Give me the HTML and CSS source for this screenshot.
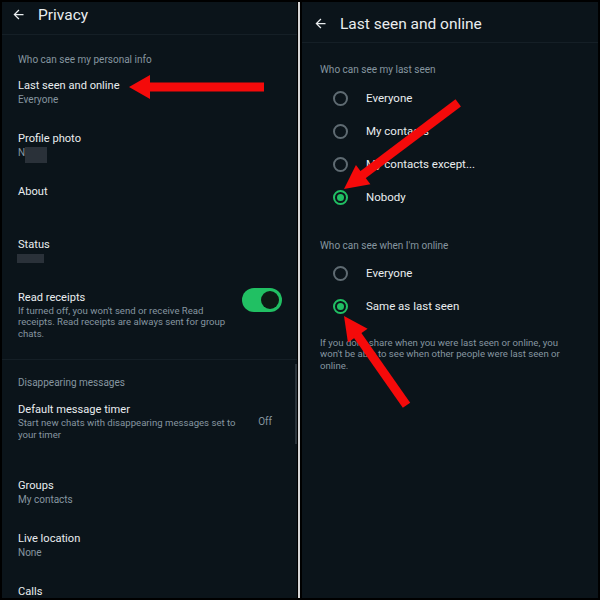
FILE: index.html
```html
<!DOCTYPE html>
<html lang="en">
<head>
    <meta charset="UTF-8">
    <meta name="viewport" content="width=device-width, initial-scale=1.0">
    <title>Privacy - Last seen and online</title>
    <link rel="stylesheet" href="styles.css">
</head>
<body>
    <div class="screens">
        <!-- Privacy settings -->
        <section class="panel privacy">
            <header class="topbar">
                <svg class="back" viewBox="0 0 24 24"><path d="M20 11H7.83l5.59-5.59L12 4l-8 8 8 8 1.41-1.41L7.83 13H20v-2z"/></svg>
                <h1>Privacy</h1>
            </header>

            <div class="section-label">Who can see my personal info</div>
            <div class="item">
                <div class="item-title">Last seen and online</div>
                <div class="item-sub">Everyone</div>
            </div>
            <div class="item">
                <div class="item-title">Profile photo</div>
                <div class="item-sub">N<span class="redact redact-photo"></span></div>
            </div>
            <div class="item">
                <div class="item-title">About</div>
            </div>
            <div class="item">
                <div class="item-title">Status</div>
                <div class="item-sub"><span class="redact redact-status"></span></div>
            </div>
            <div class="item item-row item-receipts">
                <div class="item-text">
                    <div class="item-title">Read receipts</div>
                    <div class="item-desc">If turned off, you won't send or receive Read receipts. Read receipts are always sent for group chats.</div>
                </div>
                <div class="toggle on"><span class="knob"></span></div>
            </div>

            <div class="section-label section-split">Disappearing messages</div>
            <div class="item item-row item-timer">
                <div class="item-text">
                    <div class="item-title">Default message timer</div>
                    <div class="item-desc">Start new chats with disappearing messages set to your timer</div>
                </div>
                <div class="item-value">Off</div>
            </div>
            <div class="item">
                <div class="item-title">Groups</div>
                <div class="item-sub">My contacts</div>
            </div>
            <div class="item">
                <div class="item-title">Live location</div>
                <div class="item-sub">None</div>
            </div>
            <div class="item">
                <div class="item-title">Calls</div>
            </div>
            <div class="scrollbar"></div>
        </section>

        <div class="divider"></div>

        <!-- Last seen and online -->
        <section class="panel last-seen">
            <header class="topbar topbar-tall">
                <svg class="back" viewBox="0 0 24 24"><path d="M20 11H7.83l5.59-5.59L12 4l-8 8 8 8 1.41-1.41L7.83 13H20v-2z"/></svg>
                <h1>Last seen and online</h1>
            </header>

            <div class="section-label radio-label">Who can see my last seen</div>
            <div class="radio"><span class="dot"></span>Everyone</div>
            <div class="radio"><span class="dot"></span>My contacts</div>
            <div class="radio"><span class="dot"></span>My contacts except...</div>
            <div class="radio checked"><span class="dot"></span>Nobody</div>

            <div class="section-label radio-label second">Who can see when I'm online</div>
            <div class="radio"><span class="dot"></span>Everyone</div>
            <div class="radio checked"><span class="dot"></span>Same as last seen</div>

            <p class="note">If you don't share when you were last seen or online, you won't be able to see when other people were last seen or online.</p>
        </section>

        <!-- annotation arrows drawn over both screens -->
        <svg class="arrows" viewBox="0 0 600 600">
            <g fill="#f50a0a">
                <g transform="translate(129 87)">
                    <polygon points="0,0 21,-12 21,12"/>
                    <rect x="19" y="-4.5" width="116" height="9"/>
                </g>
                <g transform="translate(344 189) rotate(-37)">
                    <polygon points="0,0 24,-12 24,12"/>
                    <rect x="22" y="-4.5" width="121" height="9"/>
                </g>
                <g transform="translate(344 316) rotate(55)">
                    <polygon points="0,0 24,-12 24,12"/>
                    <rect x="22" y="-4.5" width="87" height="9"/>
                </g>
            </g>
        </svg>
    </div>
</body>
</html>
```

FILE: styles.css
```css
* {
    margin: 0;
    padding: 0;
    box-sizing: border-box;
}

body {
    background: #000;
    font-family: Roboto, 'Liberation Sans', Arial, sans-serif;
}

.screens {
    position: relative;
    width: 600px;
    height: 600px;
    padding: 2px;
    display: flex;
    background: #000;
}

.panel {
    position: relative;
    background: #0b141a;
    color: #e9edef;
    overflow: hidden;
}

.privacy {
    width: 295px;
}

.last-seen {
    width: 296px;
}

.divider {
    width: 5px;
    border-left: 1px solid #000;
    border-right: 2px solid #000;
    background: #d6d6d6;
}

/* top bar */
.topbar {
    display: flex;
    align-items: center;
    height: 33px;
    padding-bottom: 7px;
    border-bottom: 1px solid #151f26;
}

.topbar-tall {
    height: 41px;
    padding: 3px 0 0;
}

.back {
    width: 15px;
    height: 15px;
    fill: #e9edef;
    margin: 0 12px 0 9px;
}

.last-seen .back {
    margin-left: 11px;
}

.topbar h1 {
    font-size: 15.5px;
    font-weight: 400;
    color: #e9edef;
}

/* privacy list */
.section-label {
    font-size: 10px;
    line-height: 14px;
    color: #8696a0;
    padding: 17.5px 16px 6px;
}

.section-split {
    border-top: 1px solid #151f26;
    padding-top: 16px;
    padding-bottom: 3px;
}

.item {
    min-height: 53px;
    padding: 6px 16px;
}

.item-title {
    font-size: 11.1px;
    line-height: 14px;
    color: #e9edef;
}

.item-sub {
    font-size: 10px;
    line-height: 14px;
    color: #8696a0;
    display: flex;
    align-items: flex-start;
}

.item-desc {
    font-size: 9.6px;
    line-height: 11.5px;
    color: #8696a0;
}

.item-row {
    display: flex;
    align-items: flex-start;
    gap: 14px;
}

.item-text {
    flex: 1;
}

.item-receipts {
    min-height: 74.5px;
    padding-bottom: 19.5px;
    padding-right: 15px;
}

.item-timer {
    min-height: 80px;
    padding-top: 10px;
    padding-bottom: 28px;
    padding-right: 25px;
}

.item-value {
    font-size: 10px;
    line-height: 14px;
    color: #8696a0;
    margin-top: 12px;
}

.redact {
    display: inline-block;
    background: #2a3139;
}

.redact-photo {
    width: 22px;
    height: 16px;
    margin-top: 1px;
}

.redact-status {
    width: 27px;
    height: 9px;
    margin-top: 2px;
    margin-left: -1px;
}

.toggle {
    width: 40px;
    height: 24px;
    margin-top: -3px;
    border-radius: 12px;
    background: #21c063;
    display: flex;
    align-items: center;
    justify-content: flex-end;
    padding: 3px;
}

.knob {
    width: 18px;
    height: 18px;
    border-radius: 50%;
    background: #0d1a14;
}

.scrollbar {
    position: absolute;
    right: 0;
    top: 362px;
    width: 2px;
    height: 80px;
    background: #2a333a;
}

/* last seen options */
.last-seen .section-label {
    padding: 20px 18px 4.5px;
}

.last-seen .second {
    padding: 25.5px 18px 3.5px;
}

.radio {
    display: flex;
    align-items: center;
    height: 33px;
    padding-left: 31px;
    font-size: 11.5px;
    color: #e9edef;
}

.dot {
    width: 15px;
    height: 15px;
    border-radius: 50%;
    border: 2px solid #5f6b72;
    margin-right: 18px;
    display: flex;
    align-items: center;
    justify-content: center;
}

.radio.checked .dot {
    border-color: #21c063;
}

.radio.checked .dot::after {
    content: '';
    width: 7px;
    height: 7px;
    border-radius: 50%;
    background: #21c063;
}

.note {
    margin-top: 14px;
    padding: 0 18px;
    font-size: 9.6px;
    line-height: 11.5px;
    color: #8696a0;
}

.arrows {
    position: absolute;
    top: 0;
    left: 0;
    width: 600px;
    height: 600px;
    pointer-events: none;
}
```
